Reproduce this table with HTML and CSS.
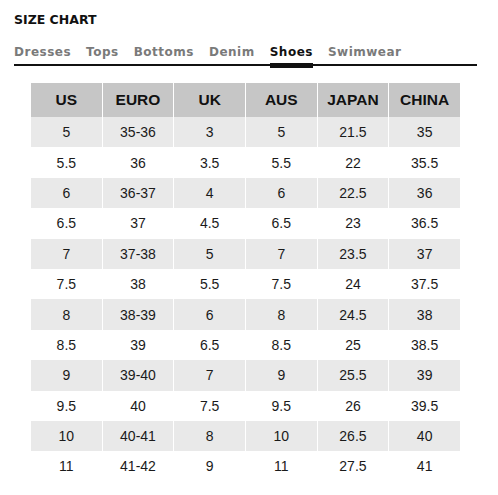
FILE: index.html
```html
<!DOCTYPE html>
<html>

<head>
  <title>Size Chart</title>
  <link rel="stylesheet" href="styles.css">
</head>

<body>
  <div class="chart">
    <h2 class="title">SIZE CHART</h2>

    <div class="tabs">
      <span class="tab">Dresses</span>
      <span class="tab">Tops</span>
      <span class="tab">Bottoms</span>
      <span class="tab">Denim</span>
      <span class="tab active">Shoes</span>
      <span class="tab">Swimwear</span>
    </div>

    <table class="sizes">
      <thead>
        <tr>
          <th>US</th>
          <th>EURO</th>
          <th>UK</th>
          <th>AUS</th>
          <th>JAPAN</th>
          <th>CHINA</th>
        </tr>
      </thead>
      <tbody>
        <tr><td>5</td><td>35-36</td><td>3</td><td>5</td><td>21.5</td><td>35</td></tr>
        <tr><td>5.5</td><td>36</td><td>3.5</td><td>5.5</td><td>22</td><td>35.5</td></tr>
        <tr><td>6</td><td>36-37</td><td>4</td><td>6</td><td>22.5</td><td>36</td></tr>
        <tr><td>6.5</td><td>37</td><td>4.5</td><td>6.5</td><td>23</td><td>36.5</td></tr>
        <tr><td>7</td><td>37-38</td><td>5</td><td>7</td><td>23.5</td><td>37</td></tr>
        <tr><td>7.5</td><td>38</td><td>5.5</td><td>7.5</td><td>24</td><td>37.5</td></tr>
        <tr><td>8</td><td>38-39</td><td>6</td><td>8</td><td>24.5</td><td>38</td></tr>
        <tr><td>8.5</td><td>39</td><td>6.5</td><td>8.5</td><td>25</td><td>38.5</td></tr>
        <tr><td>9</td><td>39-40</td><td>7</td><td>9</td><td>25.5</td><td>39</td></tr>
        <tr><td>9.5</td><td>40</td><td>7.5</td><td>9.5</td><td>26</td><td>39.5</td></tr>
        <tr><td>10</td><td>40-41</td><td>8</td><td>10</td><td>26.5</td><td>40</td></tr>
        <tr><td>11</td><td>41-42</td><td>9</td><td>11</td><td>27.5</td><td>41</td></tr>
      </tbody>
    </table>
  </div>
</body>

</html>
```

FILE: styles.css
```css
body {
  margin: 0;
  background: white;
  font-family: "Liberation Sans", Arial, sans-serif;
  color: #1a1a1a;
}

.chart {
  width: 463px;
  padding: 12px 0 0 14px;
}

.title {
  margin: 0;
  font-family: "DejaVu Sans", Verdana, sans-serif;
  font-size: 12.5px;
  font-weight: bold;
  line-height: 16px;
  color: #111;
}

/* Category tabs */
.tabs {
  display: flex;
  gap: 15px;
  margin-top: 16px;
  border-bottom: 2px solid #111;
}

.tab {
  position: relative;
  font-family: "DejaVu Sans", Verdana, sans-serif;
  font-size: 12px;
  font-weight: bold;
  letter-spacing: 0.5px;
  line-height: 16px;
  padding-bottom: 4px;
  color: #7a7a7a;
}

.tab.active {
  color: #111;
}

.tab.active::after {
  content: "";
  position: absolute;
  left: 0;
  right: 0;
  bottom: -4px;
  height: 5px;
  background: #111;
}

/* Size table */
.sizes {
  width: 431px;
  margin: 17px auto 0;
  border-collapse: collapse;
  table-layout: fixed;
  text-align: center;
}

.sizes th,
.sizes td {
  padding: 0;
  border-left: 1px solid white;
  border-right: 1px solid white;
}

.sizes th {
  height: 34px;
  background: #c6c6c6;
  font-size: 15.5px;
  font-weight: bold;
  color: #111;
}

.sizes td {
  height: 30.4px;
  font-size: 14px;
}

.sizes tbody tr:nth-child(odd) td {
  background: #e9e9e9;
}
```
